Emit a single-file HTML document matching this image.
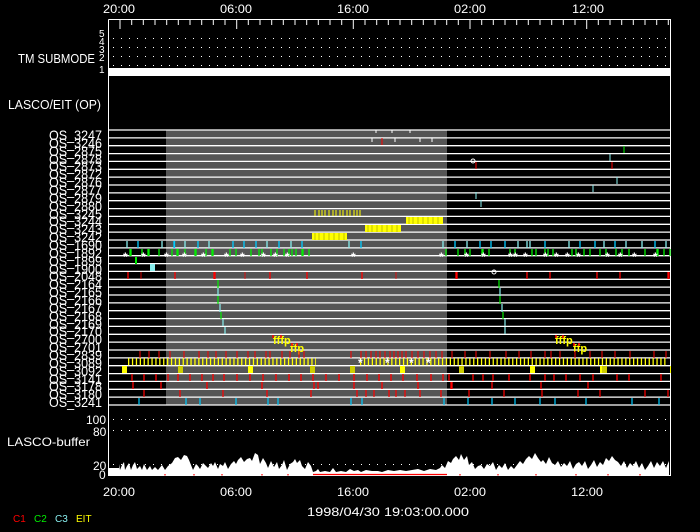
<!DOCTYPE html>
<html><head><meta charset="utf-8"><style>
html,body{margin:0;padding:0;background:#000;width:700px;height:532px;overflow:hidden}
svg{display:block}
text{font-family:"Liberation Sans",sans-serif;fill:#fff}
</style></head><body>
<svg width="700" height="532" viewBox="0 0 700 532" xmlns="http://www.w3.org/2000/svg">
<!-- top labels -->
<g font-size="12">
<text x="103" y="13" textLength="32" lengthAdjust="spacingAndGlyphs">20:00</text>
<text x="220" y="13" textLength="32" lengthAdjust="spacingAndGlyphs">06:00</text>
<text x="337" y="13" textLength="32" lengthAdjust="spacingAndGlyphs">16:00</text>
<text x="454" y="13" textLength="32" lengthAdjust="spacingAndGlyphs">02:00</text>
<text x="572" y="13" textLength="32" lengthAdjust="spacingAndGlyphs">12:00</text>
</g>
<!-- gray region -->
<rect x="166" y="130" width="281" height="275" fill="#555"/>
<!-- frame -->
<path d="M108.5 19.5H670.5V405M108.5 19.5V476M108.5 475.5H670.5V405" stroke="#fff" fill="none"/>
<path stroke="#fff" d="M131.7 20v5M143.3 20v5M155 20v5M166.7 20v5M178.3 20v5M190 20v5M201.7 20v5M213.3 20v5M225 20v5M248.3 20v5M260 20v5M271.7 20v5M283.3 20v5M295 20v5M306.7 20v5M318.3 20v5M330 20v5M341.7 20v5M365 20v5M376.7 20v5M388.3 20v5M400 20v5M411.7 20v5M423.3 20v5M435 20v5M446.7 20v5M458.3 20v5M481.7 20v5M493.3 20v5M505 20v5M516.7 20v5M528.3 20v5M540 20v5M551.7 20v5M563.3 20v5M575 20v5M598.3 20v5M610 20v5M621.7 20v5M633.3 20v5M645 20v5M656.7 20v5M668.3 20v5M120 20v9M236.7 20v9M353.3 20v9M470 20v9M586.7 20v9"/>
<!-- dotted levels -->
<path d="M113 38.5H670M113 47.5H670M113 56.5H670M113 65.5H670" stroke="#fff" stroke-dasharray="1 7"/>
<rect x="108" y="68" width="563" height="8" fill="#fff"/>
<g font-size="10">
<text x="99" y="37">5</text><text x="99" y="45">4</text><text x="99" y="53">3</text><text x="99" y="61">2</text><text x="99" y="73">1</text>
</g>
<text x="18" y="63" font-size="13" textLength="77" lengthAdjust="spacingAndGlyphs">TM SUBMODE</text>
<text x="8" y="109" font-size="13" textLength="93" lengthAdjust="spacingAndGlyphs">LASCO/EIT (OP)</text>
<!-- row lines -->
<path stroke="#fff" stroke-width="1.3" d="M108 130H671M108 137.9H671M108 145.7H671M108 153.6H671M108 161.4H671M108 169.3H671M108 177.1H671M108 185H671M108 192.9H671M108 200.7H671M108 208.6H671M108 216.4H671M108 224.3H671M108 232.1H671M108 240H671M108 247.9H671M108 255.7H671M108 263.6H671M108 271.4H671M108 279.3H671M108 287.1H671M108 295H671M108 302.9H671M108 310.7H671M108 318.6H671M108 326.4H671M108 334.3H671M108 342.1H671M108 350H671M108 357.9H671M108 365.7H671M108 373.6H671M108 381.4H671M108 389.3H671M108 397.1H671M108 405H671"/>
<!-- row labels -->
<g font-size="14" text-anchor="end">
<text x="102" y="140" textLength="53" lengthAdjust="spacingAndGlyphs">OS_3247</text><text x="102" y="148" textLength="53" lengthAdjust="spacingAndGlyphs">OS_3246</text><text x="102" y="156" textLength="53" lengthAdjust="spacingAndGlyphs">OS_2875</text><text x="102" y="164" textLength="53" lengthAdjust="spacingAndGlyphs">OS_2878</text><text x="102" y="171" textLength="53" lengthAdjust="spacingAndGlyphs">OS_2873</text><text x="102" y="179" textLength="53" lengthAdjust="spacingAndGlyphs">OS_2872</text><text x="102" y="187" textLength="53" lengthAdjust="spacingAndGlyphs">OS_2876</text><text x="102" y="195" textLength="53" lengthAdjust="spacingAndGlyphs">OS_2877</text><text x="102" y="203" textLength="53" lengthAdjust="spacingAndGlyphs">OS_2879</text><text x="102" y="211" textLength="53" lengthAdjust="spacingAndGlyphs">OS_2880</text><text x="102" y="219" textLength="53" lengthAdjust="spacingAndGlyphs">OS_3245</text><text x="102" y="226" textLength="53" lengthAdjust="spacingAndGlyphs">OS_3244</text><text x="102" y="234" textLength="53" lengthAdjust="spacingAndGlyphs">OS_3243</text><text x="102" y="242" textLength="53" lengthAdjust="spacingAndGlyphs">OS_3242</text><text x="102" y="250" textLength="53" lengthAdjust="spacingAndGlyphs">OS_1690</text><text x="102" y="258" textLength="53" lengthAdjust="spacingAndGlyphs">OS_1892</text><text x="102" y="266" textLength="53" lengthAdjust="spacingAndGlyphs">OS_1899</text><text x="102" y="274" textLength="53" lengthAdjust="spacingAndGlyphs">OS_1900</text><text x="102" y="281" textLength="53" lengthAdjust="spacingAndGlyphs">OS_2048</text><text x="102" y="289" textLength="53" lengthAdjust="spacingAndGlyphs">OS_2164</text><text x="102" y="297" textLength="53" lengthAdjust="spacingAndGlyphs">OS_2165</text><text x="102" y="305" textLength="53" lengthAdjust="spacingAndGlyphs">OS_2166</text><text x="102" y="313" textLength="53" lengthAdjust="spacingAndGlyphs">OS_2167</text><text x="102" y="321" textLength="53" lengthAdjust="spacingAndGlyphs">OS_2168</text><text x="102" y="329" textLength="53" lengthAdjust="spacingAndGlyphs">OS_2169</text><text x="102" y="336" textLength="53" lengthAdjust="spacingAndGlyphs">OS_2170</text><text x="102" y="344" textLength="53" lengthAdjust="spacingAndGlyphs">OS_2700</text><text x="102" y="352" textLength="53" lengthAdjust="spacingAndGlyphs">OS_2701</text><text x="102" y="360" textLength="53" lengthAdjust="spacingAndGlyphs">OS_2839</text><text x="102" y="368" textLength="53" lengthAdjust="spacingAndGlyphs">OS_3089</text><text x="102" y="376" textLength="53" lengthAdjust="spacingAndGlyphs">OS_3092</text><text x="102" y="384" textLength="53" lengthAdjust="spacingAndGlyphs">OS_3141</text><text x="102" y="391" textLength="53" lengthAdjust="spacingAndGlyphs">OS_3178</text><text x="102" y="399" textLength="53" lengthAdjust="spacingAndGlyphs">OS_3180</text><text x="102" y="407" textLength="53" lengthAdjust="spacingAndGlyphs">OS_3241</text>
</g>
<!-- top small marks -->
<path stroke="#fff" d="M376 130v3M392 130v3M410 130v3M372 138v4M395 138v4M420 138v4M432 138v4"/>
<path stroke="#f00" d="M382 138v7M476 162v7M612 162v7"/>
<path stroke="#0e0" d="M624 146v7"/>
<path stroke="#8ee" d="M610 154v7M593 185v7M617 177v7M481 200v7M476 192v7"/>
<!-- row 10 3245 ticks -->
<path stroke="#ff0" d="M315 210v6M319 210v6M322 210v6M325 210v6M329 210v6M333 210v6M336 210v6M340 210v6M343 210v6M347 210v6M350 210v6M354 210v6M357 210v6M360 210v6"/>
<!-- blocks -->
<rect x="406" y="217" width="37" height="7" fill="#ff0"/>
<rect x="365" y="225" width="36" height="7" fill="#ff0"/>
<rect x="312" y="233" width="35" height="7" fill="#ff0"/>
<path stroke="#aa0" stroke-width="0.7" d="M409 217v7M413 217v7M418 217v7M423 217v7M428 217v7M433 217v7M438 217v7M368 225v7M372 225v7M377 225v7M382 225v7M387 225v7M392 225v7M397 225v7M315 233v7M319 233v7M324 233v7M329 233v7M334 233v7M339 233v7M344 233v7"/>
<!-- row 14 cyan -->
<path stroke="#0cf" stroke-width="1.3" d="M138 241v7M174 241v7M174.5 241v7M198 241v7M233 241v7M244 241v7M256 241v7M279 241v7M302 241v7M361 241v7M455 241v7M480 241v7M491 241v7M505 241v7M545 241v7M580 241v7M595 241v7M615 241v7M655 241v7"/>
<path stroke="#8ee" stroke-width="1.3" d="M127 241v7M162 241v7M185 241v7M209 241v7M267 241v7M291 241v7M349 241v7M443 241v7M467 241v7M518 241v7M527 241v7M530 241v7M569 241v7M604 241v7M626 241v7M642 241v7M666 241v7"/>
<!-- row 15 green + asterisks -->
<path stroke="#0e0" stroke-width="1.3" d="M130 249v7M131 249v7M142 249v7M148 249v7M149 249v7M159 249v7M172 249v7M177 249v7M178 249v7M185 249v7M195 249v7M196 249v7M206 249v7M212 249v7M213 249v7M230 249v7M236 249v7M251 249v7M259 249v7M262 249v7M271 249v7M277 249v7M284 249v7M289 249v7M292 249v7M296 249v7M302 249v7M303 249v7M309 249v7M446 249v7M458 249v7M465 249v7M470 249v7M482 249v7M483 249v7M489 249v7M510 249v7M515 249v7M532 249v7M536 249v7M545 249v7M548 249v7M553 249v7M572 249v7M576 249v7M584 249v7M590 249v7M600 249v7M606 249v7M616 249v7M622 249v7M629 249v7M645 249v7M657 249v7M658 249v7M664 249v7M670 249v7"/>
<g font-size="12" font-weight="bold">
<text x="123" y="261">*</text><text x="141" y="261">*</text><text x="164" y="261">*</text><text x="182" y="261">*</text><text x="201" y="261">*</text><text x="224" y="261">*</text><text x="240" y="261">*</text><text x="261" y="261">*</text><text x="273" y="261">*</text><text x="285" y="261">*</text><text x="351" y="261">*</text><text x="439" y="261">*</text><text x="464" y="261">*</text><text x="481" y="261">*</text><text x="508" y="261">*</text><text x="513" y="261">*</text><text x="523" y="261">*</text><text x="543" y="261">*</text><text x="554" y="261">*</text><text x="565" y="261">*</text><text x="576" y="261">*</text><text x="605" y="261">*</text><text x="618" y="261">*</text><text x="632" y="261">*</text><text x="653" y="261">*</text>
</g>
<!-- row 16,17 -->
<rect x="135" y="257" width="2" height="7" fill="#0e0"/>
<rect x="150" y="264" width="5" height="7" fill="#8ee"/>
<!-- row 18 red -->
<path stroke="#f00" stroke-width="1.3" d="M128 272v7M175 272v7M214 272v7M215 272v7M270 272v7M307 272v7M362 272v7M456 272v7M457 272v7M527 272v7M550 272v7M597 272v7M620 272v7M668 272v7M669 272v7"/>
<path stroke="#f00" stroke-width="0.8" d="M141 272v7M245 272v7M396 272v7"/>
<circle cx="494" cy="272" r="2" stroke="#fff" fill="none"/>
<circle cx="473" cy="161" r="2" stroke="#fff" fill="none"/>
<!-- diagonals -->
<path stroke-width="1.2" fill="none" stroke="#0e0" d="M218 280v8M218 296v8M221 312v7M499 280v8M500 296v8M503 312v7"/>
<path stroke-width="1.2" fill="none" stroke="#8ee" d="M218 288v8M220 304v8M223 319v7M225 327v7M500 288v8M502 304v8M505 319v7M505 327v7"/>
<!-- fffp -->
<g font-size="11" font-weight="bold">
<text x="273" y="344" style="fill:#ff0">fffp</text>
<text x="290" y="352" style="fill:#ff0">ffp</text>
<text x="555" y="344" style="fill:#ff0">fffp</text>
<text x="573" y="352" style="fill:#ff0">ffp</text>
</g>
<path stroke="#f00" stroke-width="1.5" d="M273 335v3M281 335v3M292 343v3M297 343v3M556 335v3M563 335v3M574 343v3M579 343v3"/>
<!-- row 28 red -->
<path stroke="#f00" stroke-width="1" d="M140 351v7M149 351v7M159 351v7M170 351v7M184 351v7M199 351v7M208 351v7M216 351v7M226 351v7M237 351v7M248 351v7M255 351v7M266 351v7M270 351v7M282 351v7M290 351v7M299 351v7M304 351v7M351 351v7M361 351v7M366 351v7M371 351v7M376 351v7M380 351v7M385 351v7M390 351v7M394 351v7M398 351v7M402 351v7M406 351v7M412 351v7M418 351v7M424 351v7M430 351v7M436 351v7M442 351v7M452 351v7M465 351v7M476 351v7M490 351v7M506 351v7M519 351v7M531 351v7M545 351v7M551 351v7M560 351v7M575 351v7M590 351v7M602 351v7M615 351v7M630 351v7M654 351v7M666 351v7"/>
<!-- row 29 yellow dense -->
<path stroke="#ff0" stroke-width="7" stroke-dasharray="1.3 2.6" d="M128 361.8H316M360 361.8H668"/>
<g font-size="12" font-weight="bold"><text x="358" y="367">*</text><text x="385" y="367">*</text><text x="409" y="367">*</text><text x="426" y="367">*</text></g>
<!-- row 30 blocks -->
<g fill="#ff0"><rect x="122" y="366" width="5" height="7"/><rect x="248" y="366" width="5" height="7"/><rect x="400" y="366" width="5" height="7"/><rect x="459" y="366" width="5" height="7"/><rect x="530" y="366" width="5" height="7"/><rect x="600" y="366" width="5" height="7"/><rect x="670" y="366" width="1" height="7"/></g>
<g fill="#cc0"><rect x="178" y="366" width="5" height="7"/><rect x="310" y="366" width="5" height="7"/><rect x="350" y="366" width="5" height="7"/><rect x="459" y="366" width="5" height="7"/><rect x="602" y="366" width="5" height="7"/></g>
<!-- row 31,32,33 red -->
<path stroke="#f00" stroke-width="1.3" d="M132 374v7M144 374v7M156 374v7M168 374v7M178 374v7M190 374v7M202 374v7M213 374v7M224 374v7M237 374v7M250 374v7M263 374v7M276 374v7M289 374v7M301 374v7M313 374v7M326 374v7M339 374v7M354 374v7M367 374v7M379 374v7M391 374v7M403 374v7M417 374v7M431 374v7M443 374v7M449 374v7M473 374v7M483 374v7M493 374v7M509 374v7M530 374v7M545 374v7M554 374v7M566 374v7M580 374v7M593 374v7M617 374v7M629 374v7M661 374v7"/>
<path stroke="#f00" stroke-width="1.3" d="M133 382v7M161 382v7M207 382v7M262 382v7M314 382v7M318 382v7M354 382v7M382 382v7M418 382v7M451 382v7M452 382v7M492 382v7M541 382v7M588 382v7"/>
<path stroke="#f00" stroke-width="1.2" d="M144 390v7M180 390v7M223 390v7M267 390v7M311 390v7M357 390v7M366 390v7M374 390v7M389 390v7M396 390v7M405 390v7M420 390v7M441 390v7M469 390v7M504 390v7M542 390v7M578 390v7M600 390v7M645 390v7M668 390v7"/>
<!-- row 34 cyan -->
<path stroke="#0cf" stroke-width="1.2" d="M139 398v7M186 398v7M200 398v7M236 398v7M268 398v7M278 398v7M351 398v7M362 398v7M444 398v7M468 398v7M492 398v7M515 398v7M540 398v7M555 398v7M586 398v7M632 398v7M659 398v7"/>
<!-- buffer panel -->
<path d="M113 419.5H670M113 430.5H670M113 464.5H670" stroke="#fff" stroke-dasharray="1 7"/>
<g font-size="12">
<text x="86" y="424">100</text><text x="93" y="436">80</text><text x="93" y="470">20</text><text x="99" y="479">0</text>
<text x="7" y="446" textLength="83" lengthAdjust="spacingAndGlyphs">LASCO-buffer</text>
</g>
<path fill="#fff" d="M108 475V468H119V464L120 470L122 465L124 462L125 470L127 466L129 463L131 470L133 465L135 462L137 469L140 466L142 470L144 464L147 470L150 466L152 470L155 467L158 470L162 465L165 470L168 466L172 463L175 458L178 457L181 460L184 455L187 456L189 460L191 465L193 470L196 464L198 466L200 469L203 463L206 466L208 468L211 463L213 466L215 462L218 469L220 464L223 466L225 462L228 469L231 464L234 461L236 464L238 460L241 457L244 462L247 459L250 458L252 461L255 453L258 455L260 464L263 458L266 463L268 468L271 461L274 467L277 462L279 469L282 465L284 460L287 470L290 464L293 462L295 459L297 463L300 460L302 466L305 469L308 462L311 466L313 472L316 471L318 469L320 472L325 471L330 472L333 468L336 472L341 471L346 472L350 469L354 471L358 470L361 472L366 470L372 471L378 471L382 472L388 470L394 471L400 470L406 471L412 470L418 469L424 471L430 469L436 470L440 468L442 465L445 468L448 461L451 463L453 459L456 456L459 460L461 454L464 460L467 456L469 465L472 462L475 469L478 466L481 465L484 469L487 464L490 466L493 462L496 470L499 465L502 468L505 463L508 470L511 466L514 469L517 465L520 461L523 464L526 459L529 456L532 459L535 453L538 458L541 462L543 460L546 464L549 457L552 463L555 465L558 461L561 467L564 463L567 466L570 461L573 469L576 464L579 462L582 466L585 461L588 469L591 465L594 460L597 467L600 462L603 465L606 458L609 461L612 456L615 460L618 462L621 466L624 461L627 468L630 463L633 466L636 461L639 468L642 463L645 470L648 466L651 461L654 468L657 462L660 466L663 461L666 468L669 461V475Z"/>
<path stroke="#f00" stroke-width="1.2" d="M313 474.5H447"/>
<path stroke="#f00" stroke-width="1.2" d="M165 474v1.5M194 474v1.5M222 474v1.5M262 474v1.5M288 474v1.5M460 474v1.5M498 474v1.5M536 474v1.5M576 474v1.5M608 474v1.5M640 474v1.5"/>
<!-- bottom axis labels -->
<g font-size="12">
<text x="103" y="496" textLength="32" lengthAdjust="spacingAndGlyphs">20:00</text>
<text x="220" y="496" textLength="32" lengthAdjust="spacingAndGlyphs">06:00</text>
<text x="337" y="496" textLength="32" lengthAdjust="spacingAndGlyphs">16:00</text>
<text x="454" y="496" textLength="32" lengthAdjust="spacingAndGlyphs">02:00</text>
<text x="571" y="496" textLength="32" lengthAdjust="spacingAndGlyphs">12:00</text>
<text x="307" y="516" textLength="162" lengthAdjust="spacingAndGlyphs">1998/04/30 19:03:00.000</text>
</g>
<g font-size="10">
<text x="13" y="522" style="fill:#f00">C1</text>
<text x="34" y="522" style="fill:#0e0">C2</text>
<text x="55" y="522" style="fill:#8ee">C3</text>
<text x="76" y="522" style="fill:#ff0">EIT</text>
</g>
</svg>
</body></html>
